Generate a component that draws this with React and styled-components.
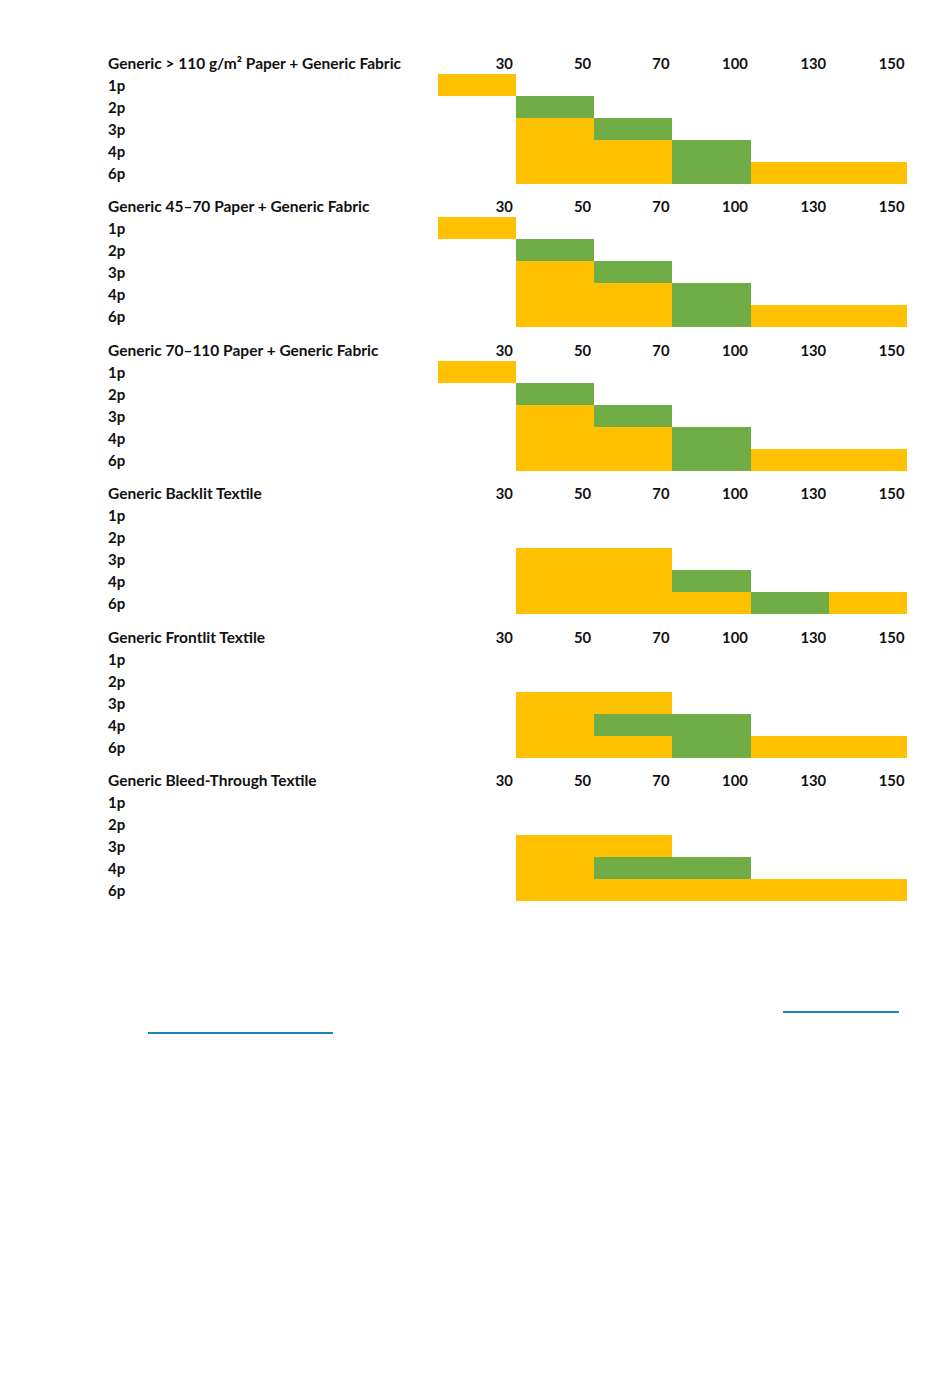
import React from "react";
import styled, { createGlobalStyle } from "styled-components";

const GlobalStyle = createGlobalStyle`
  html, body {
    margin: 0;
    padding: 0;
    background: #ffffff;
  }
  body {
    font-family: Lato, "Open Sans", "Liberation Sans", sans-serif;
    color: #111111;
  }
`;

const COLS = [30, 50, 70, 100, 130, 150];

// y = yellow, g = green, "" = empty
const SECTIONS = [
  {
    title: "Generic > 110 g/m² Paper + Generic Fabric",
    rows: [
      ["1p", ["y", "", "", "", "", ""]],
      ["2p", ["", "g", "", "", "", ""]],
      ["3p", ["", "y", "g", "", "", ""]],
      ["4p", ["", "y", "y", "g", "", ""]],
      ["6p", ["", "y", "y", "g", "y", "y"]],
    ],
  },
  {
    title: "Generic 45–70 Paper + Generic Fabric",
    rows: [
      ["1p", ["y", "", "", "", "", ""]],
      ["2p", ["", "g", "", "", "", ""]],
      ["3p", ["", "y", "g", "", "", ""]],
      ["4p", ["", "y", "y", "g", "", ""]],
      ["6p", ["", "y", "y", "g", "y", "y"]],
    ],
  },
  {
    title: "Generic 70–110 Paper + Generic Fabric",
    rows: [
      ["1p", ["y", "", "", "", "", ""]],
      ["2p", ["", "g", "", "", "", ""]],
      ["3p", ["", "y", "g", "", "", ""]],
      ["4p", ["", "y", "y", "g", "", ""]],
      ["6p", ["", "y", "y", "g", "y", "y"]],
    ],
  },
  {
    title: "Generic Backlit Textile",
    rows: [
      ["1p", ["", "", "", "", "", ""]],
      ["2p", ["", "", "", "", "", ""]],
      ["3p", ["", "y", "y", "", "", ""]],
      ["4p", ["", "y", "y", "g", "", ""]],
      ["6p", ["", "y", "y", "y", "g", "y"]],
    ],
  },
  {
    title: "Generic Frontlit Textile",
    rows: [
      ["1p", ["", "", "", "", "", ""]],
      ["2p", ["", "", "", "", "", ""]],
      ["3p", ["", "y", "y", "", "", ""]],
      ["4p", ["", "y", "g", "g", "", ""]],
      ["6p", ["", "y", "y", "g", "y", "y"]],
    ],
  },
  {
    title: "Generic Bleed-Through Textile",
    rows: [
      ["1p", ["", "", "", "", "", ""]],
      ["2p", ["", "", "", "", "", ""]],
      ["3p", ["", "y", "y", "", "", ""]],
      ["4p", ["", "y", "g", "g", "", ""]],
      ["6p", ["", "y", "y", "y", "y", "y"]],
    ],
  },
];

const Page = styled.div`
  width: 950px;
  min-height: 1388px;
  box-sizing: border-box;
  padding: 51.5px 0 0 108px;
`;

const Section = styled.div`
  display: grid;
  grid-template-columns: 329.5px repeat(6, 78.33px);
  grid-auto-rows: 22px;
  margin-top: ${(p) => (p.$first ? "0" : "11.5px")};
`;

const Label = styled.div`
  display: flex;
  align-items: center;
  font-size: ${(p) => (p.$title ? "15.5px" : "15px")};
  font-weight: 700;
  white-space: nowrap;
`;

const ColHead = styled.div`
  display: flex;
  align-items: center;
  justify-content: flex-end;
  padding-right: 3px;
  font-size: 14.8px;
  font-weight: 700;
`;

const Cell = styled.div`
  background: ${(p) =>
    p.$fill === "y" ? "#ffc000" : p.$fill === "g" ? "#70ad47" : "transparent"};
`;

const Footer = styled.div`
  width: 799px;
  margin-top: 110px;
  display: flex;
  flex-direction: column;
  gap: 19.5px;
`;

const LinkLine = styled.span`
  display: block;
  height: 1.5px;
  background: #1b84b4;
  width: ${(p) => p.$w}px;
  margin-left: ${(p) => p.$left}px;
`;

export default function App() {
  return (
    <>
      <GlobalStyle />
      <Page>
        {SECTIONS.map((s, i) => (
          <Section key={s.title} $first={i === 0}>
            <Label $title>{s.title}</Label>
            {COLS.map((c) => (
              <ColHead key={c}>{c}</ColHead>
            ))}
            {s.rows.map(([name, cells]) => (
              <React.Fragment key={name}>
                <Label>{name}</Label>
                {cells.map((f, j) => (
                  <Cell key={j} $fill={f} />
                ))}
              </React.Fragment>
            ))}
          </Section>
        ))}
        <Footer>
          <LinkLine $left={674.5} $w={116} />
          <LinkLine $left={39.5} $w={185} />
        </Footer>
      </Page>
    </>
  );
}
